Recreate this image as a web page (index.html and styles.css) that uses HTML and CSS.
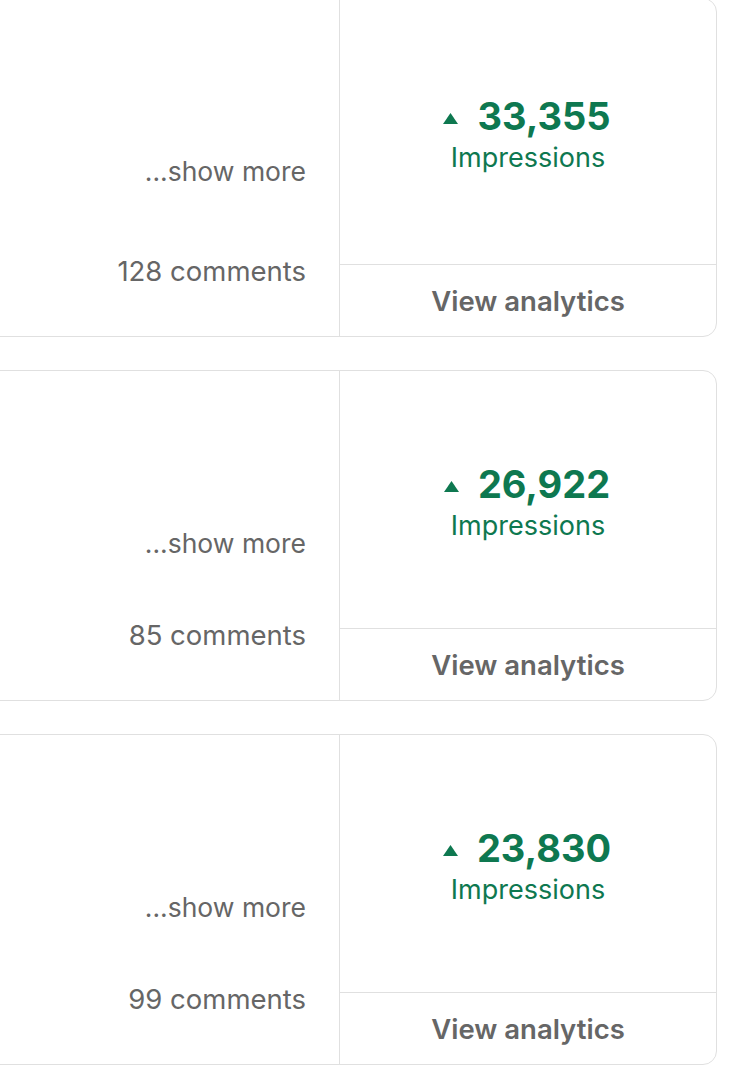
FILE: index.html
```html
<!DOCTYPE html>
<html lang="en">

<head>
    <meta charset="UTF-8">
    <meta name="viewport" content="width=device-width, initial-scale=1.0">
    <title>Posts</title>
    <link rel="stylesheet" href="styles.css">
</head>

<body>
    <div class="feed">
        <article class="post post--long">
            <div class="post-body">
                <a class="show-more" href="#">...show more</a>
                <span class="comments">128 comments</span>
            </div>
            <div class="post-stats">
                <div class="stats-main">
                    <div class="stats-count">
                        <svg class="trend" width="15" height="11" viewBox="0 0 15 11"><path d="M7.5 0 L15 11 L0 11 Z" /></svg>
                        <span>33,355</span>
                    </div>
                    <div class="stats-label">Impressions</div>
                </div>
                <a class="stats-link" href="#">View analytics</a>
            </div>
        </article>

        <article class="post">
            <div class="post-body">
                <a class="show-more" href="#">...show more</a>
                <span class="comments">85 comments</span>
            </div>
            <div class="post-stats">
                <div class="stats-main">
                    <div class="stats-count">
                        <svg class="trend" width="15" height="11" viewBox="0 0 15 11"><path d="M7.5 0 L15 11 L0 11 Z" /></svg>
                        <span>26,922</span>
                    </div>
                    <div class="stats-label">Impressions</div>
                </div>
                <a class="stats-link" href="#">View analytics</a>
            </div>
        </article>

        <article class="post">
            <div class="post-body">
                <a class="show-more" href="#">...show more</a>
                <span class="comments">99 comments</span>
            </div>
            <div class="post-stats">
                <div class="stats-main">
                    <div class="stats-count">
                        <svg class="trend" width="15" height="11" viewBox="0 0 15 11"><path d="M7.5 0 L15 11 L0 11 Z" /></svg>
                        <span>23,830</span>
                    </div>
                    <div class="stats-label">Impressions</div>
                </div>
                <a class="stats-link" href="#">View analytics</a>
            </div>
        </article>
    </div>
</body>

</html>
```

FILE: styles.css
```css
* {
    margin: 0;
    padding: 0;
    box-sizing: border-box;
}

body {
    font-family: Inter, 'Noto Sans', sans-serif;
    background: #fff;
    color: #666;
    overflow: hidden;
}

a {
    color: inherit;
    text-decoration: none;
}

.feed {
    display: flex;
    flex-direction: column;
    gap: 33px;
    margin-top: -2px;
    margin-left: -40px;
    width: 757px;
}

.post {
    display: grid;
    grid-template-columns: 1fr 376px;
    border: 1px solid #e0e0e0;
    border-radius: 14px;
    background: #fff;
}

.post-body {
    display: flex;
    flex-direction: column;
    align-items: flex-end;
    padding: 160px 33px 53px 0;
    border-right: 1px solid #e0e0e0;
    font-size: 27.5px;
    line-height: 24px;
    color: #666;
}

.show-more {
    font-size: 26.5px;
}

.comments {
    margin-top: 68px;
}

.post--long .comments {
    margin-top: 76px;
}

.post-stats {
    display: flex;
    flex-direction: column;
}

.stats-main {
    flex: 1;
    display: flex;
    flex-direction: column;
    align-items: center;
    justify-content: center;
    padding-top: 9px;
    color: #0e7850;
}

.stats-count {
    display: flex;
    align-items: center;
    gap: 19px;
    font-size: 38px;
    font-weight: 700;
    line-height: 44px;
    margin-right: 2px;
}

.trend {
    fill: #0e7850;
    margin-top: 5px;
}

.stats-label {
    font-size: 27px;
    line-height: 40px;
}

.stats-link {
    height: 72px;
    border-top: 1px solid #e0e0e0;
    display: flex;
    align-items: center;
    justify-content: center;
    font-size: 27.5px;
    font-weight: 600;
    color: #666;
}
```
